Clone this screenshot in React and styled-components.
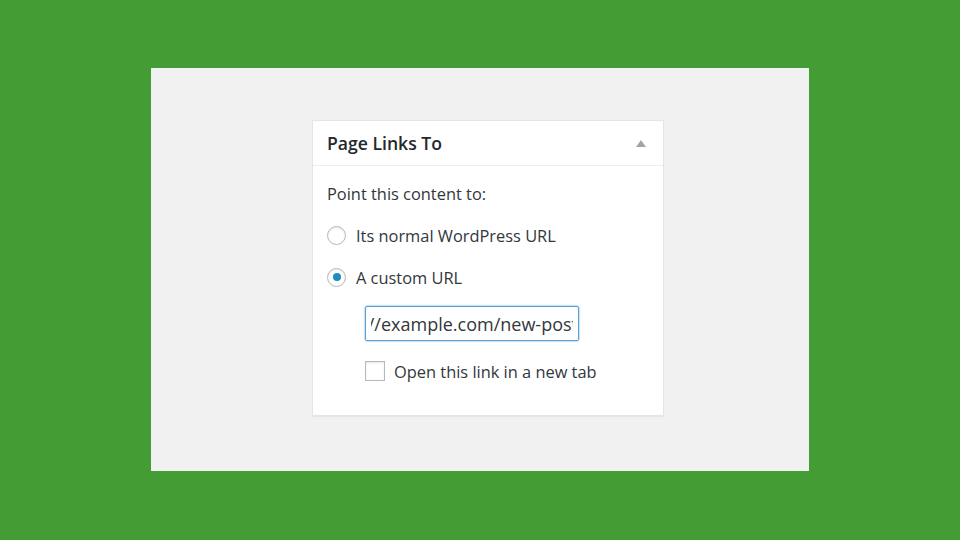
import React from "react";
import styled, { createGlobalStyle } from "styled-components";

const Global = createGlobalStyle`
  html, body { margin: 0; padding: 0; }
  body {
    background: #449c34;
    font-family: "Open Sans", "Noto Sans", sans-serif;
    -webkit-font-smoothing: antialiased;
  }
`;

const Stage = styled.div`
  width: 960px;
  height: 540px;
  box-sizing: border-box;
  padding: 68px 0 0 151px;
`;

const Panel = styled.div`
  width: 658px;
  height: 403px;
  background: #f1f1f1;
  box-sizing: border-box;
  padding: 52px 0 0 161px;
`;

const Card = styled.div`
  width: 352px;
  height: 296px;
  box-sizing: border-box;
  background: #fff;
  border: 1px solid #e5e5e5;
  box-shadow: 0 1px 1px rgba(0, 0, 0, 0.04);
`;

const Header = styled.div`
  height: 44px;
  border-bottom: 1px solid #eeeeee;
  display: flex;
  align-items: center;
  justify-content: space-between;
  padding: 0 17px 0 14px;
`;

const Title = styled.h2`
  margin: 0;
  font-size: 17.6px;
  font-weight: 600;
  color: #23282d;
`;

const Toggle = styled.span`
  width: 0;
  height: 0;
  border-left: 5px solid transparent;
  border-right: 5px solid transparent;
  border-bottom: 7px solid #a0a5aa;
`;

const Body = styled.div`
  padding: 16px 14px 0 14px;
  display: flex;
  flex-direction: column;
  color: #32373c;
  font-size: 16.4px;
`;

const Label = styled.p`
  margin: 0;
  height: 24px;
  line-height: 24px;
`;

const Option = styled.label`
  display: flex;
  align-items: center;
  gap: 10px;
  height: 24px;
  margin-top: ${(p) => p.$top}px;
`;

const Radio = styled.span`
  width: 19px;
  height: 19px;
  box-sizing: border-box;
  border-radius: 50%;
  border: 1px solid #b4b9be;
  box-shadow: inset 0 1px 2px rgba(0, 0, 0, 0.1);
  display: flex;
  align-items: center;
  justify-content: center;
  flex: none;
  &::after {
    content: "";
    width: 8px;
    height: 8px;
    border-radius: 50%;
    background: #1e8cbe;
    display: ${(p) => (p.$checked ? "block" : "none")};
  }
`;

const Indent = styled.div`
  padding-left: 38px;
  display: flex;
  flex-direction: column;
`;

const Input = styled.div`
  margin-top: 17px;
  width: 214px;
  height: 35px;
  box-sizing: border-box;
  border: 1px solid #5b9dd9;
  box-shadow: 0 0 2px rgba(30, 140, 190, 0.8);
  border-radius: 2px;
  padding: 0 5px;
  display: flex;
  align-items: center;
  font-size: 18px;
  color: #32373c;
`;

const Clip = styled.div`
  flex: 1;
  overflow: hidden;
  display: flex;
  justify-content: flex-end;
  white-space: nowrap;
`;

const Value = styled.span`
  margin-right: -5px;
`;

const Check = styled.span`
  width: 20px;
  height: 20px;
  box-sizing: border-box;
  border: 1px solid #b4b9be;
  box-shadow: inset 0 1px 2px rgba(0, 0, 0, 0.1);
  flex: none;
`;

const CheckRow = styled.label`
  display: flex;
  align-items: center;
  gap: 9px;
  margin-top: 19px;
  height: 22px;
`;

export default function App() {
  return (
    <>
      <Global />
      <Stage>
        <Panel>
          <Card>
            <Header>
              <Title>Page Links To</Title>
              <Toggle />
            </Header>
            <Body>
              <Label>Point this content to:</Label>
              <Option $top={17}>
                <Radio />
                Its normal WordPress URL
              </Option>
              <Option $top={18}>
                <Radio $checked />
                A custom URL
              </Option>
              <Indent>
                <Input>
                  <Clip>
                    <Value>http://example.com/new-post</Value>
                  </Clip>
                </Input>
                <CheckRow>
                  <Check />
                  Open this link in a new tab
                </CheckRow>
              </Indent>
            </Body>
          </Card>
        </Panel>
      </Stage>
    </>
  );
}
